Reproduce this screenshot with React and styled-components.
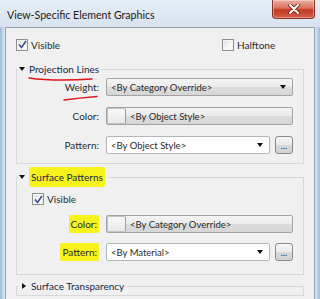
import React from 'react';
import styled, { createGlobalStyle } from 'styled-components';

const GlobalStyle = createGlobalStyle`
  html, body { margin: 0; padding: 0; }
  body {
    width: 320px;
    height: 299px;
    overflow: hidden;
    background: #fff;
    font-family: Lato, "Noto Sans", sans-serif;
  }
`;

const Window = styled.div`
  width: 320px;
  height: 299px;
  display: flex;
  flex-direction: column;
  box-sizing: border-box;
  overflow: hidden;
  background: linear-gradient(90deg, #9db9da 0px, #c4d7ec 3px, #dae5f1 5px, #dae5f1 calc(100% - 6px), #c4d7ec calc(100% - 3px), #9db9da 100%);
`;

const TitleBar = styled.div`
  height: 27px;
  flex: none;
  display: flex;
  justify-content: space-between;
  align-items: flex-start;
  padding: 0 5px 0 7px;
  background: linear-gradient(180deg, #e6edf5 0%, #d8e3ef 100%);
`;

const Title = styled.div`
  margin-top: 8px;
  font-size: 10.6px;
  line-height: 14px;
  color: #1b1b1b;
`;

const CloseButton = styled.div`
  width: 43px;
  height: 19px;
  box-sizing: border-box;
  display: flex;
  align-items: center;
  justify-content: center;
  border: 1px solid #8a3326;
  border-top: none;
  border-radius: 0 0 4px 4px;
  background: linear-gradient(180deg, #eab0a4 0%, #d9705c 45%, #c23a22 55%, #d2604a 100%);
  box-shadow: inset 0 0 0 1px rgba(255, 255, 255, 0.35);
`;

const Client = styled.div`
  flex: 1;
  margin: 0 5px 0 5px;
  border: 1px solid #93a5bb;
  border-bottom: none;
  background: #f0f0f0;
  padding: 10px 10px 0 10px;
  font-size: 9.5px;
  color: #2a2a2a;
`;

const TopRow = styled.div`
  display: grid;
  grid-template-columns: 206px auto;
  height: 13px;
  align-items: center;
`;

const CheckLabel = styled.label`
  display: flex;
  align-items: center;
  gap: 3px;
  padding-left: ${p => p.$indent || 0}px;
  line-height: 12px;
  font-size: 10px;
`;

const Box = styled.span`
  width: 12px;
  height: 12px;
  box-sizing: border-box;
  border: 1px solid #8e8f8f;
  background: linear-gradient(135deg, #dcdcdc 0%, #f7f7f7 60%, #ffffff 100%);
  box-shadow: inset 0 0 0 1px #f4f4f4;
  display: flex;
  align-items: center;
  justify-content: center;
`;

const Group = styled.fieldset`
  margin: ${p => p.$top}px 0 0;
  padding: 0 10px ${p => p.$bottom}px 0;
  border: 1px solid #d8d8d8;
  min-width: 0;
`;

const Legend = styled.legend`
  display: flex;
  align-items: center;
  gap: 4px;
  height: 14px;
  padding: 0 3px 0 1px;
  margin-left: 1px;
  font-size: 10px;
  color: #16264a;
`;

const Arrow = styled.span`
  width: 0;
  height: 0;
  border-left: ${p => (p.$open ? '3.5px solid transparent' : '4px solid #111')};
  border-right: ${p => (p.$open ? '3.5px solid transparent' : '0')};
  border-top: ${p => (p.$open ? '4px solid #111' : '3.5px solid transparent')};
  border-bottom: ${p => (p.$open ? '0' : '3.5px solid transparent')};
  margin-left: ${p => (p.$open ? 0 : 3)}px;
  margin-right: ${p => (p.$open ? 0 : 1)}px;
`;

const Rows = styled.div`
  display: flex;
  flex-direction: column;
  gap: ${p => p.$gap || 11}px;
  padding-top: ${p => p.$top || 2}px;
`;

const Row = styled.div`
  display: grid;
  grid-template-columns: 82px 1fr;
  column-gap: 7px;
  align-items: center;
  height: 18px;
`;

const Label = styled.div`
  text-align: right;
  line-height: 12px;
  font-size: 10px;
`;

const Controls = styled.div`
  display: flex;
  gap: 5px;
  height: 18px;
`;

const Combo = styled.div`
  flex: 1;
  box-sizing: border-box;
  display: flex;
  align-items: center;
  justify-content: space-between;
  padding: 0 6px 0 ${p => (p.$swatch ? 0 : 4)}px;
  border: 1px solid ${p => (p.$white ? '#b4b6bc' : '#a3a3a3')};
  border-radius: 2px;
  background: ${p => (p.$white ? '#fff' : 'linear-gradient(180deg, #f4f4f4 0%, #ebebeb 50%, #dddddd 51%, #d6d6d6 100%)')};
  color: #2a2a2a;
`;

const Swatch = styled.span`
  width: 19px;
  height: 16px;
  box-sizing: border-box;
  margin-right: 4px;
  border: 1px solid #c2c2c2;
  border-right-color: #9c9c9c;
  border-radius: 2px;
  background: linear-gradient(180deg, #f8f8f8 0%, #e9e9e9 100%);
`;

const ComboText = styled.span`
  flex: 1;
  display: flex;
  align-items: center;
`;

const Caret = styled.span`
  width: 0;
  height: 0;
  border-left: 3.5px solid transparent;
  border-right: 3.5px solid transparent;
  border-top: 4px solid #111;
`;

const DotsButton = styled.div`
  width: 18px;
  box-sizing: border-box;
  border: 1px solid #8a8a8a;
  border-radius: 3px;
  background: linear-gradient(180deg, #f6f6f6 0%, #e9e9e9 50%, #dadada 51%, #d2d2d2 100%);
  display: flex;
  align-items: flex-end;
  justify-content: center;
  padding-bottom: 3px;
  font-size: 9px;
  line-height: 9px;
  color: #333;
`;

const Mark = styled.span`
  display: inline-block;
  background: #f7f21c;
  padding: ${p => p.$v || 3}px 2px;
  border-radius: 2px;
`;

const Underlined = styled.span`
  position: relative;
  display: inline-block;
`;

const Scribble = styled.svg`
  position: absolute;
  left: ${p => p.$left}px;
  top: ${p => p.$top}px;
  overflow: visible;
`;

function Check({ checked }) {
  return (
    <Box>
      {checked && (
        <svg width="9" height="9" viewBox="0 0 9 9">
          <path d="M1 4.5 L3.5 7.5 L8 1" fill="none" stroke="#3a4f8e" strokeWidth="1.6" />
        </svg>
      )}
    </Box>
  );
}

function Field({ label, children }) {
  return (
    <Row>
      <Label>{label}</Label>
      <Controls>{children}</Controls>
    </Row>
  );
}

export default function App() {
  return (
    <>
      <GlobalStyle />
      <Window>
        <TitleBar>
          <Title>View-Specific Element Graphics</Title>
          <CloseButton>
            <svg width="12" height="10" viewBox="0 0 12 10">
              <path d="M2 1 L10 9 M10 1 L2 9" stroke="#6b2318" strokeWidth="3.6" strokeLinecap="round" />
              <path d="M2 1 L10 9 M10 1 L2 9" stroke="#fff" strokeWidth="2" strokeLinecap="round" />
            </svg>
          </CloseButton>
        </TitleBar>
        <Client>
          <TopRow>
            <CheckLabel><Check checked />Visible</CheckLabel>
            <CheckLabel><Check />Halftone</CheckLabel>
          </TopRow>

          <Group $top={11} $bottom={9}>
            <Legend>
              <Arrow $open />
              <Underlined>
                Projection Lines
                <Scribble $left={0} $top={14} width="64" height="5" viewBox="0 0 64 5">
                  <path d="M0 1 Q 25 4.5 63 2" fill="none" stroke="#e01414" strokeWidth="1.4" strokeLinecap="round" />
                </Scribble>
              </Underlined>
            </Legend>
            <Rows $top={2}>
              <Field
                label={
                  <Underlined>
                    Weight:
                    <Scribble $left={-1} $top={15} width="34" height="5" viewBox="0 0 34 5">
                      <path d="M0 4 Q 15 2 33 0.5" fill="none" stroke="#e01414" strokeWidth="1.4" strokeLinecap="round" />
                    </Scribble>
                  </Underlined>
                }
              >
                <Combo>
                  <ComboText>&lt;By Category Override&gt;</ComboText>
                  <Caret />
                </Combo>
              </Field>
              <Field label="Color:">
                <Combo $swatch>
                  <ComboText><Swatch />&lt;By Object Style&gt;</ComboText>
                </Combo>
              </Field>
              <Field label="Pattern:">
                <Combo $white>
                  <ComboText>&lt;By Object Style&gt;</ComboText>
                  <Caret />
                </Combo>
                <DotsButton>...</DotsButton>
              </Field>
            </Rows>
          </Group>

          <Group $top={6} $bottom={13}>
            <Legend>
              <Arrow $open />
              <Mark $v={4}>Surface Patterns</Mark>
            </Legend>
            <Rows $top={9} $gap={10}>
              <CheckLabel $indent={15}><Check checked />Visible</CheckLabel>
              <Field label={<Mark>Color:</Mark>}>
                <Combo $swatch>
                  <ComboText><Swatch />&lt;By Category Override&gt;</ComboText>
                </Combo>
              </Field>
              <Field label={<Mark>Pattern:</Mark>}>
                <Combo $white>
                  <ComboText>&lt;By Material&gt;</ComboText>
                  <Caret />
                </Combo>
                <DotsButton>...</DotsButton>
              </Field>
            </Rows>
          </Group>

          <Group $top={4} $bottom={2}>
            <Legend>
              <Arrow />
              Surface Transparency
            </Legend>
          </Group>
        </Client>
      </Window>
    </>
  );
}
